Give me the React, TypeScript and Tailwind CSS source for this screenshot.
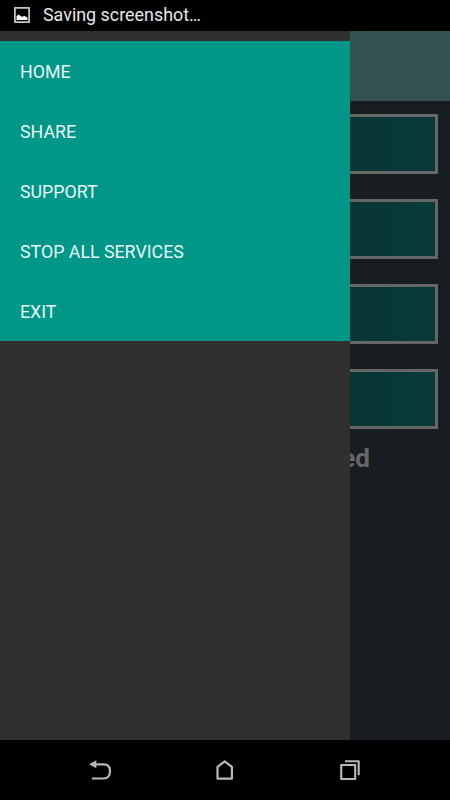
import React from 'react';

const menuItems = ['HOME', 'SHARE', 'SUPPORT', 'STOP ALL SERVICES', 'EXIT'];
const cards = [1, 2, 3, 4];

const StatusBar: React.FC = () => (
    <div className="flex h-[31px] shrink-0 items-center bg-black pb-px pl-3.5">
        <svg className="mr-[13px] h-4 w-4" viewBox="0 0 16 16">
            <rect x="0.9" y="0.9" width="14.2" height="14.2" fill="none" stroke="#d8d8d8" strokeWidth="1.6" />
            <path d="M2.5 13V9.2L4.8 7.4L6.5 9L8 9.8L10.5 9L13.5 10.6V13Z" fill="#fff" />
        </svg>
        <span className="text-[17.9px] leading-[28px] text-[#e6e6e6]">Saving screenshot…</span>
    </div>
);

const Drawer: React.FC = () => (
    <nav className="absolute inset-y-0 left-0 w-[350px] bg-[#303030] pt-2.5">
        <ul className="bg-[#009788]">
            {menuItems.map((item) => (
                <li key={item} className="flex h-[60px] items-center px-5 pt-0.5 text-[17.8px] text-[#e9f6f4]">
                    {item}
                </li>
            ))}
        </ul>
    </nav>
);

const NavBar: React.FC = () => (
    <div className="flex h-[60px] shrink-0 items-center justify-between bg-black px-[86px]">
        <svg className="h-7 w-7" viewBox="0 0 28 28" fill="none" stroke="#b8b8b8" strokeWidth="2.2">
            <path d="M9 8.3H17.8C21.6 8.3 24 10.7 24 15.2S21.6 22.5 17.8 22.5H6" />
            <path d="M3 8.3L10.3 4.3V12.3Z" fill="#b8b8b8" stroke="none" />
        </svg>
        <svg className="h-7 w-7" viewBox="0 0 28 28" fill="none" stroke="#b8b8b8" strokeWidth="2.2" strokeLinejoin="round">
            <path d="M6.5 10.8L13.7 5.3L20.9 10.8V22.6H6.5Z" />
        </svg>
        <svg className="h-7 w-7" viewBox="0 0 28 28" fill="none" stroke="#b8b8b8" strokeWidth="2.1" strokeLinejoin="round">
            <rect x="5.2" y="9" width="14" height="14" />
            <path d="M9 5.3H22.7V19.2" />
        </svg>
    </div>
);

const App: React.FC = () => {
    return (
        <div className="flex h-[800px] w-[450px] flex-col overflow-hidden bg-black font-[Roboto,sans-serif]">
            <StatusBar />
            <div className="relative flex-1 overflow-hidden bg-[#171d20]">
                <div className="h-[70px] bg-[#345250]" />
                <div className="flex flex-col gap-[25px] px-3 pt-[13px]">
                    {cards.map((card) => (
                        <div
                            key={card}
                            className="h-[60px] border-[3px] border-[#666666] bg-linear-to-r from-[#082322] to-[#083b38]"
                        />
                    ))}
                </div>
                <p className="mt-3.5 pr-20 text-right font-[Roboto,sans-serif] text-[26px] leading-[30px] font-bold text-[#666666]">
                    ed
                </p>
                <Drawer />
            </div>
            <NavBar />
        </div>
    );
};

export default App;
